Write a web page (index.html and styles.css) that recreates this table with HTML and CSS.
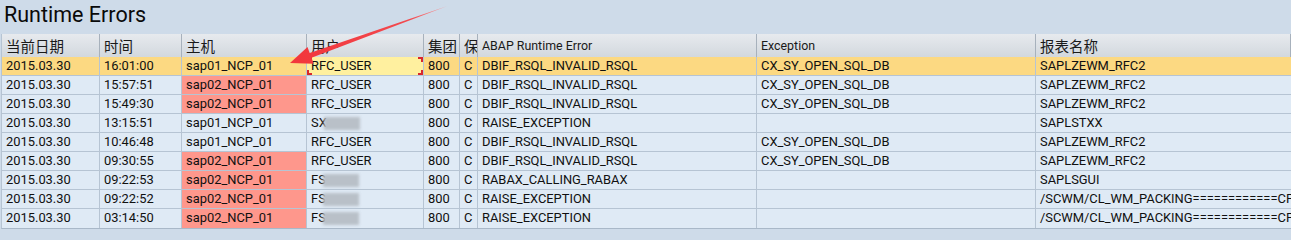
FILE: index.html
```html
<!DOCTYPE html>
<html lang="zh">
<head>
  <meta charset="UTF-8" />
  <title>Runtime Errors</title>
  <link rel="stylesheet" href="styles.css">
</head>
<body>
  <div class="screen">
    <h1 class="title">Runtime Errors</h1>
    <div class="grid">
      <!-- Шапка -->
      <div class="row head">
        <div class="cell c-date cjk">当前日期</div>
        <div class="cell c-time cjk">时间</div>
        <div class="cell c-host cjk">主机</div>
        <div class="cell c-user cjk">用户</div>
        <div class="cell c-client cjk">集团</div>
        <div class="cell c-keep cjk">保</div>
        <div class="cell c-err">ABAP Runtime Error</div>
        <div class="cell c-exc">Exception</div>
        <div class="cell c-prog cjk">报表名称</div>
      </div>
      <div class="row sel">
        <div class="cell c-date">2015.03.30</div>
        <div class="cell c-time">16:01:00</div>
        <div class="cell c-host">sap01_NCP_01</div>
        <div class="cell c-user focus">RFC_USER</div>
        <div class="cell c-client">800</div>
        <div class="cell c-keep">C</div>
        <div class="cell c-err">DBIF_RSQL_INVALID_RSQL</div>
        <div class="cell c-exc">CX_SY_OPEN_SQL_DB</div>
        <div class="cell c-prog">SAPLZEWM_RFC2</div>
      </div>
      <div class="row">
        <div class="cell c-date">2015.03.30</div>
        <div class="cell c-time">15:57:51</div>
        <div class="cell c-host bad">sap02_NCP_01</div>
        <div class="cell c-user">RFC_USER</div>
        <div class="cell c-client">800</div>
        <div class="cell c-keep">C</div>
        <div class="cell c-err">DBIF_RSQL_INVALID_RSQL</div>
        <div class="cell c-exc">CX_SY_OPEN_SQL_DB</div>
        <div class="cell c-prog">SAPLZEWM_RFC2</div>
      </div>
      <div class="row">
        <div class="cell c-date">2015.03.30</div>
        <div class="cell c-time">15:49:30</div>
        <div class="cell c-host bad">sap02_NCP_01</div>
        <div class="cell c-user">RFC_USER</div>
        <div class="cell c-client">800</div>
        <div class="cell c-keep">C</div>
        <div class="cell c-err">DBIF_RSQL_INVALID_RSQL</div>
        <div class="cell c-exc">CX_SY_OPEN_SQL_DB</div>
        <div class="cell c-prog">SAPLZEWM_RFC2</div>
      </div>
      <div class="row">
        <div class="cell c-date">2015.03.30</div>
        <div class="cell c-time">13:15:51</div>
        <div class="cell c-host">sap01_NCP_01</div>
        <div class="cell c-user">SX<span class="blur"></span></div>
        <div class="cell c-client">800</div>
        <div class="cell c-keep">C</div>
        <div class="cell c-err">RAISE_EXCEPTION</div>
        <div class="cell c-exc"></div>
        <div class="cell c-prog">SAPLSTXX</div>
      </div>
      <div class="row">
        <div class="cell c-date">2015.03.30</div>
        <div class="cell c-time">10:46:48</div>
        <div class="cell c-host">sap01_NCP_01</div>
        <div class="cell c-user">RFC_USER</div>
        <div class="cell c-client">800</div>
        <div class="cell c-keep">C</div>
        <div class="cell c-err">DBIF_RSQL_INVALID_RSQL</div>
        <div class="cell c-exc">CX_SY_OPEN_SQL_DB</div>
        <div class="cell c-prog">SAPLZEWM_RFC2</div>
      </div>
      <div class="row">
        <div class="cell c-date">2015.03.30</div>
        <div class="cell c-time">09:30:55</div>
        <div class="cell c-host bad">sap02_NCP_01</div>
        <div class="cell c-user">RFC_USER</div>
        <div class="cell c-client">800</div>
        <div class="cell c-keep">C</div>
        <div class="cell c-err">DBIF_RSQL_INVALID_RSQL</div>
        <div class="cell c-exc">CX_SY_OPEN_SQL_DB</div>
        <div class="cell c-prog">SAPLZEWM_RFC2</div>
      </div>
      <div class="row">
        <div class="cell c-date">2015.03.30</div>
        <div class="cell c-time">09:22:53</div>
        <div class="cell c-host bad">sap02_NCP_01</div>
        <div class="cell c-user">FS<span class="blur"></span></div>
        <div class="cell c-client">800</div>
        <div class="cell c-keep">C</div>
        <div class="cell c-err">RABAX_CALLING_RABAX</div>
        <div class="cell c-exc"></div>
        <div class="cell c-prog">SAPLSGUI</div>
      </div>
      <div class="row">
        <div class="cell c-date">2015.03.30</div>
        <div class="cell c-time">09:22:52</div>
        <div class="cell c-host bad">sap02_NCP_01</div>
        <div class="cell c-user">FS<span class="blur"></span></div>
        <div class="cell c-client">800</div>
        <div class="cell c-keep">C</div>
        <div class="cell c-err">RAISE_EXCEPTION</div>
        <div class="cell c-exc"></div>
        <div class="cell c-prog">/SCWM/CL_WM_PACKING============CP</div>
      </div>
      <div class="row">
        <div class="cell c-date">2015.03.30</div>
        <div class="cell c-time">03:14:50</div>
        <div class="cell c-host bad">sap02_NCP_01</div>
        <div class="cell c-user">FS<span class="blur"></span></div>
        <div class="cell c-client">800</div>
        <div class="cell c-keep">C</div>
        <div class="cell c-err">RAISE_EXCEPTION</div>
        <div class="cell c-exc"></div>
        <div class="cell c-prog">/SCWM/CL_WM_PACKING============CP</div>
      </div>
    </div>
    <!-- Стрелка поверх таблицы -->
    <svg class="arrow" width="460" height="80" viewBox="0 0 460 80">
      <defs>
        <linearGradient id="arrowFade" x1="447" y1="6" x2="300" y2="60" gradientUnits="userSpaceOnUse">
          <stop offset="0%" stop-color="#f7a0a4"/>
          <stop offset="25%" stop-color="#f24a4f"/>
          <stop offset="100%" stop-color="#f2373c"/>
        </linearGradient>
      </defs>
      <polygon points="290,63 307.5,47 309.7,53.1 447.5,6 311.5,57.7 313.7,63.8" fill="url(#arrowFade)"/>
    </svg>
  </div>
</body>
</html>
```

FILE: styles.css
```css
:root {
  --bg-color: #cedbe9;
  --row-bg: #dfeaf5;
  --grid-line: #b6c4d3;
  --sel-bg: #fcd982;
  --bad-bg: #fe978c;
  --focus-bg: #fff09f;
  --text-color: #101010;
}
* { box-sizing: border-box; }
body {
  margin: 0;
  background: var(--bg-color);
  color: var(--text-color);
  font-family: Roboto, 'Liberation Sans', sans-serif;
  overflow: hidden;
}
.screen {
  position: relative;
  width: 1291px;
  height: 240px;
  overflow: hidden;
}
.title {
  margin: 0;
  height: 34px;
  padding: 2px 0 0 4px;
  font-size: 21.5px;
  font-weight: 400;
  line-height: 26px;
  color: #0a0a0a;
}
.grid {
  margin-left: 1px;
  border-left: 1px solid var(--grid-line);
  border-bottom: 1px solid #a9b8c8;
}
.row {
  display: flex;
  height: 19px;
  background: var(--row-bg);
  border-bottom: 1px solid var(--grid-line);
  white-space: nowrap;
}
.row.sel { background: var(--sel-bg); }
.row:last-child { border-bottom: none; }
.cell {
  flex: none;
  height: 100%;
  padding-left: 4px;
  border-right: 1px solid var(--grid-line);
  font-size: 12.9px;
  line-height: 18px;
  overflow: hidden;
}
.row.head {
  height: 23px;
  background: linear-gradient(#e7eaee, #d2d8de);
  border-bottom: none;
}
.row.head .cell {
  font-size: 12.4px;
  line-height: 23px;
  border-right: 1px solid #a7b1bc;
  color: #1a1a1a;
}
.row.head .cjk {
  font-family: 'Noto Sans CJK SC', sans-serif;
  font-size: 14.5px;
}
.c-date { width: 98px; }
.c-time { width: 82px; }
.c-host { width: 125px; }
.c-user { width: 117px; }
.c-client { width: 36px; }
.c-keep { width: 18px; }
.c-err { width: 279px; }
.c-exc { width: 279px; }
.c-prog { flex: 1; border-right: none; }
.cell.bad { background: var(--bad-bg); }
/* Активная ячейка с красными уголками */
.cell.focus {
  background: var(--focus-bg);
  background-image:
    linear-gradient(#d8262c, #d8262c), linear-gradient(#d8262c, #d8262c),
    linear-gradient(#d8262c, #d8262c), linear-gradient(#d8262c, #d8262c),
    linear-gradient(#d8262c, #d8262c), linear-gradient(#d8262c, #d8262c),
    linear-gradient(#d8262c, #d8262c), linear-gradient(#d8262c, #d8262c);
  background-size: 5px 2px, 2px 5px, 5px 2px, 2px 5px, 5px 2px, 2px 5px, 5px 2px, 2px 5px;
  background-position: left top, left top, right top, right top, left bottom, left bottom, right bottom, right bottom;
  background-repeat: no-repeat;
}
.blur {
  display: inline-block;
  vertical-align: middle;
  width: 36px;
  height: 13px;
  margin-left: -3px;
  background: #b9c0c8;
  filter: blur(1.5px);
}
.arrow {
  position: absolute;
  left: 0;
  top: 0;
  pointer-events: none;
}
```
